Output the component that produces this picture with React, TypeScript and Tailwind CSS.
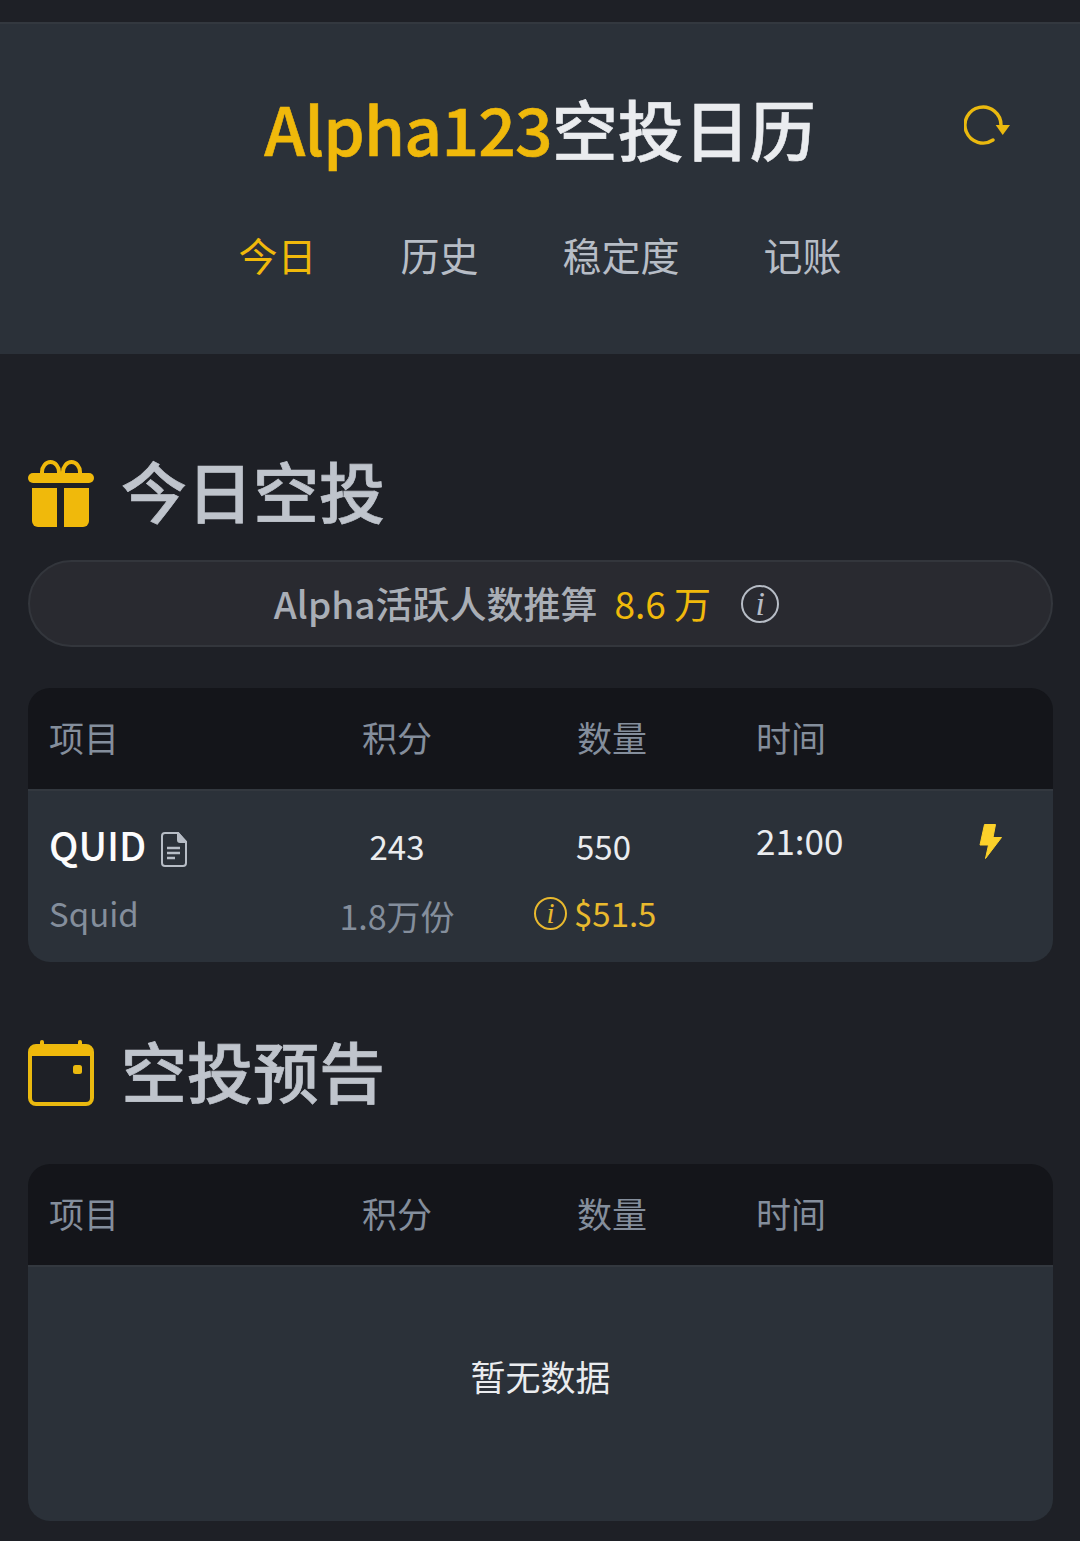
import React from "react";

const InfoIcon: React.FC<{ className: string }> = ({ className }) => (
  <span
    className={`flex items-center justify-center rounded-full border-[2.5px] border-current font-['Liberation_Serif',serif] italic leading-none ${className}`}
  >
    i
  </span>
);

const RefreshIcon = () => (
  <svg width="48" height="44" viewBox="0 0 48 44" fill="none">
    <path d="M37 21A18 18 0 1 0 29 36" stroke="#eab90f" strokeWidth="3.400" strokeLinecap="round" />
    <path d="M31.700 21H46L38.700 31z" fill="#eab90f" />
  </svg>
);

const GiftIcon = () => (
  <svg width="66" height="67" viewBox="0 0 66 67" fill="#f0b90b">
    <path d="M14 15v-3a8.500 10 0 0 1 17 0v3M35 15v-3a8.500 10 0 0 1 17 0v3" fill="none" stroke="#f0b90b" strokeWidth="4" />
    <rect x="0" y="13" width="66" height="10" rx="5" />
    <path d="M4 28h25v39H10a6 6 0 0 1-6-6z" />
    <path d="M36 28h25v33a6 6 0 0 1-6 6H36z" />
  </svg>
);

const CalendarIcon = () => (
  <svg width="66" height="66" viewBox="0 0 66 66" fill="none">
    <rect x="2" y="6" width="62" height="58" rx="6" stroke="#eab90f" strokeWidth="4" />
    <path d="M2 14a8 8 0 0 1 8-8h46a8 8 0 0 1 8 8v2H2z" fill="#f0b90b" />
    <rect x="12" y="0" width="4" height="8" rx="2" fill="#f0b90b" />
    <rect x="50" y="0" width="4" height="8" rx="2" fill="#f0b90b" />
    <rect x="45" y="25" width="9" height="9" rx="2.500" fill="#eab90f" />
  </svg>
);

const DocIcon = () => (
  <svg width="26" height="35" viewBox="0 0 26 35" fill="none" stroke="#b7bdc6" strokeWidth="2">
    <path d="M4 1h13l8 9v21a3 3 0 0 1-3 3H4a3 3 0 0 1-3-3V4a3 3 0 0 1 3-3z" />
    <path d="M17 1v7a2 2 0 0 0 2 2h6z" fill="#b7bdc6" />
    <path d="M6 16h13M6 21h13M6 26h8" strokeWidth="2.400" />
  </svg>
);

const BoltIcon = () => (
  <svg width="24" height="38" viewBox="0 0 24 38" fill="#fcd12a" stroke="#fcd12a" strokeWidth="1" strokeLinejoin="round">
    <path d="M5.500 1.500h11L14 14.500h8.500L6.500 35.500 9.500 22H1z" />
  </svg>
);

const TableHead = () => (
  <div className="grid h-[101px] grid-cols-[313px_215px_179px_1fr] items-center bg-[#14151a] pb-[2px] pl-[21px] text-[35px] text-[#848e9c]">
    <div>项目</div>
    <div>积分</div>
    <div>数量</div>
    <div>时间</div>
  </div>
);

const SectionTitle: React.FC<{ icon: React.ReactNode; title: string }> = ({ icon, title }) => (
  <div className="flex h-[66px] items-center gap-[27px]">
    <div className="self-start">{icon}</div>
    <h2 className="pb-[9px] text-[66px] leading-none font-medium text-[#bfc4cc] [-webkit-text-stroke:0.7px_#bfc4cc]">
      {title}
    </h2>
  </div>
);

export default function App() {
  return (
    <div className="h-[1541px] overflow-hidden bg-[#1e2026] pt-[22px] font-['Noto_Sans_CJK_SC',sans-serif]">
      <header className="h-[332px] border-t-2 border-[#33383f] bg-[#2b3139]">
        <div className="relative flex h-[211px] items-center justify-center pb-[5px]">
          <h1 className="text-[66px] leading-none font-medium text-[#eaecef] [-webkit-text-stroke:0.6px]">
            <span className="tracking-[-0.8px] text-[#f0b90b]">Alpha123</span>空投日历
          </h1>
          <div className="absolute top-[80px] right-[68px]">
            <RefreshIcon />
          </div>
        </div>
        <nav className="flex justify-center gap-[84px] text-[39px] leading-none text-[#b7bdc6]">
          <span className="text-[#f0b90b]">今日</span>
          <span>历史</span>
          <span>稳定度</span>
          <span>记账</span>
        </nav>
      </header>

      <main className="pr-[27px] pl-[28px]">
        <section className="pt-[106px]">
          <SectionTitle icon={<GiftIcon />} title="今日空投" />
          <div className="mt-[34px] flex h-[87px] items-center justify-center rounded-full border-2 border-[#33363c] bg-[#292a30] pr-[28px] text-[37px] font-medium text-[#a9aeb6]">
            <span>Alpha活跃人数推算</span>
            <span className="ml-[17px] font-normal text-[#f0b90b]">8.6 万</span>
            <InfoIcon className="ml-[30px] h-[38px] w-[38px] text-[34px] font-normal text-[#b7bdc6]" />
          </div>

          <div className="mt-[41px] overflow-hidden rounded-[22px]">
            <TableHead />
            <div className="relative grid h-[173px] grid-cols-[291px_114px_302px_1fr] border-t-2 border-[#33383f] bg-[#2b3139] pl-[21px]">
              <div className="pt-[28px]">
                <div className="flex items-center gap-[15px] text-[39px] leading-[50px] font-medium text-[#fcfcfd]">
                  QUID
                  <span className="mt-[10px]">
                    <DocIcon />
                  </span>
                </div>
                <div className="mt-[19px] text-[33px] leading-[50px] text-[#848e9c]">Squid</div>
              </div>
              <div className="flex flex-col items-center pt-[30px] whitespace-nowrap">
                <div className="text-[33px] leading-[50px] text-[#eaecef]">243</div>
                <div className="mt-[20px] text-[34px] leading-[50px] text-[#848e9c]">1.8万份</div>
              </div>
              <div className="pt-[30px] pl-[80px]">
                <div className="ml-[42px] text-[33px] leading-[50px] text-[#eaecef]">550</div>
                <div className="mt-[17px] flex items-center gap-[7px] text-[33px] leading-[50px] text-[#e9b92e]">
                  <InfoIcon className="h-[33px] w-[33px] text-[29px]" />
                  $51.5
                </div>
              </div>
              <div className="pt-[24px] text-[35px] leading-[50px] text-[#eaecef]">21:00</div>
              <div className="absolute top-[32px] right-[50px]">
                <BoltIcon />
              </div>
            </div>
          </div>
        </section>

        <section className="pt-[78px]">
          <SectionTitle icon={<CalendarIcon />} title="空投预告" />
          <div className="mt-[58px] overflow-hidden rounded-[22px]">
            <TableHead />
            <div className="flex h-[256px] items-center justify-center border-t-2 border-[#33383f] bg-[#2b3139] pb-[36px] text-[35px] text-[#eaecef]">
              暂无数据
            </div>
          </div>
        </section>
      </main>
    </div>
  );
}
